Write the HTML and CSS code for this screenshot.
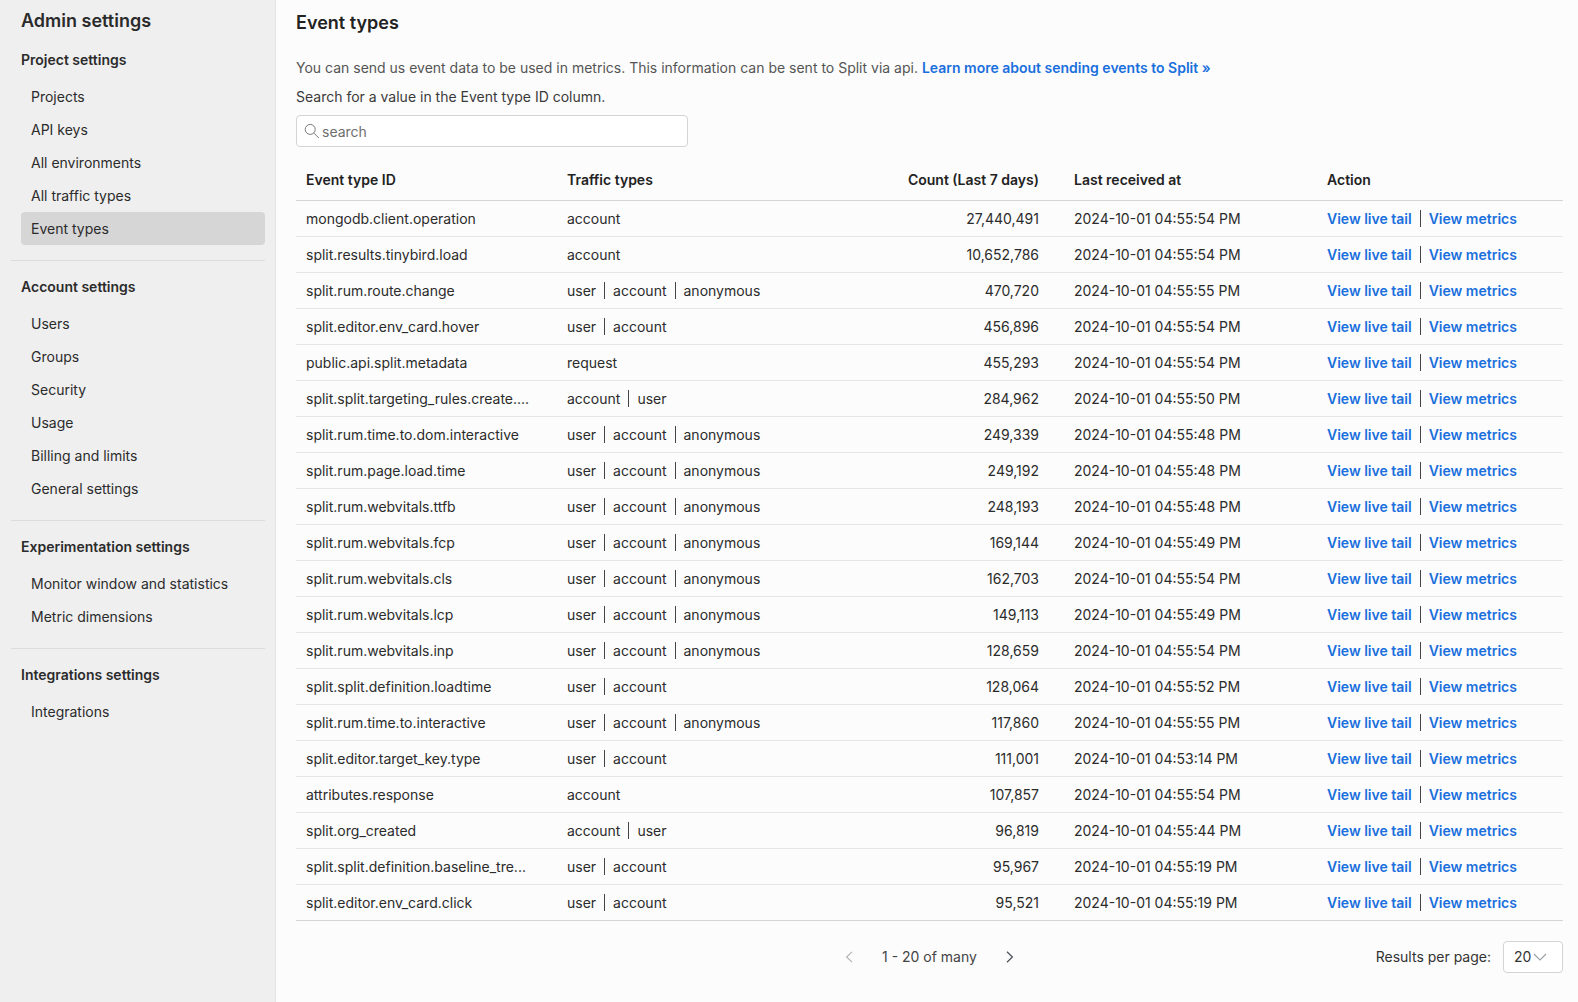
FILE: index.html
```html
<!DOCTYPE html>
<html lang="en">
<head>
<meta charset="utf-8">
<title>Event types</title>
<link rel="stylesheet" href="styles.css">
</head>
<body>
<div class="app">
<aside class="sidebar">
  <h1 class="side-title">Admin settings</h1>
  <section class="side-group">
    <h2 class="group-title">Project settings</h2>
    <a class="nav-item">Projects</a>
    <a class="nav-item">API keys</a>
    <a class="nav-item">All environments</a>
    <a class="nav-item">All traffic types</a>
    <a class="nav-item active">Event types</a>
  </section>
  <section class="side-group">
    <h2 class="group-title">Account settings</h2>
    <a class="nav-item">Users</a>
    <a class="nav-item">Groups</a>
    <a class="nav-item">Security</a>
    <a class="nav-item">Usage</a>
    <a class="nav-item">Billing and limits</a>
    <a class="nav-item">General settings</a>
  </section>
  <section class="side-group">
    <h2 class="group-title">Experimentation settings</h2>
    <a class="nav-item">Monitor window and statistics</a>
    <a class="nav-item">Metric dimensions</a>
  </section>
  <section class="side-group last">
    <h2 class="group-title">Integrations settings</h2>
    <a class="nav-item">Integrations</a>
  </section>
</aside>
<main class="main">
  <h2 class="page-title">Event types</h2>
  <p class="intro">You can send us event data to be used in metrics. This information can be sent to Split via api. <a class="learn">Learn more about sending events to Split »</a></p>
  <p class="hint">Search for a value in the Event type ID column.</p>
  <div class="search">
    <svg class="search-icon" width="16" height="16" viewBox="0 0 16 16" fill="none" stroke="#7a7a7a" stroke-width="1"><circle cx="6.2" cy="6.4" r="5"/><path d="M9.8 10l5 5"/></svg>
    <span class="search-text">search</span>
  </div>
  <table class="table">
    <thead>
      <tr><th class="c-id">Event type ID</th><th class="c-traffic">Traffic types</th><th class="c-count">Count (Last 7 days)</th><th class="c-date">Last received at</th><th class="c-action">Action</th></tr>
    </thead>
    <tbody>
      <tr><td>mongodb.client.operation</td><td><span class="tt">account</span></td><td class="num">27,440,491</td><td>2024-10-01 04:55:54 PM</td><td><a class="link">View live tail</a><a class="link">View metrics</a></td></tr>
      <tr><td>split.results.tinybird.load</td><td><span class="tt">account</span></td><td class="num">10,652,786</td><td>2024-10-01 04:55:54 PM</td><td><a class="link">View live tail</a><a class="link">View metrics</a></td></tr>
      <tr><td>split.rum.route.change</td><td><span class="tt">user</span><span class="tt">account</span><span class="tt">anonymous</span></td><td class="num">470,720</td><td>2024-10-01 04:55:55 PM</td><td><a class="link">View live tail</a><a class="link">View metrics</a></td></tr>
      <tr><td>split.editor.env_card.hover</td><td><span class="tt">user</span><span class="tt">account</span></td><td class="num">456,896</td><td>2024-10-01 04:55:54 PM</td><td><a class="link">View live tail</a><a class="link">View metrics</a></td></tr>
      <tr><td>public.api.split.metadata</td><td><span class="tt">request</span></td><td class="num">455,293</td><td>2024-10-01 04:55:54 PM</td><td><a class="link">View live tail</a><a class="link">View metrics</a></td></tr>
      <tr><td>split.split.targeting_rules.create....</td><td><span class="tt">account</span><span class="tt">user</span></td><td class="num">284,962</td><td>2024-10-01 04:55:50 PM</td><td><a class="link">View live tail</a><a class="link">View metrics</a></td></tr>
      <tr><td>split.rum.time.to.dom.interactive</td><td><span class="tt">user</span><span class="tt">account</span><span class="tt">anonymous</span></td><td class="num">249,339</td><td>2024-10-01 04:55:48 PM</td><td><a class="link">View live tail</a><a class="link">View metrics</a></td></tr>
      <tr><td>split.rum.page.load.time</td><td><span class="tt">user</span><span class="tt">account</span><span class="tt">anonymous</span></td><td class="num">249,192</td><td>2024-10-01 04:55:48 PM</td><td><a class="link">View live tail</a><a class="link">View metrics</a></td></tr>
      <tr><td>split.rum.webvitals.ttfb</td><td><span class="tt">user</span><span class="tt">account</span><span class="tt">anonymous</span></td><td class="num">248,193</td><td>2024-10-01 04:55:48 PM</td><td><a class="link">View live tail</a><a class="link">View metrics</a></td></tr>
      <tr><td>split.rum.webvitals.fcp</td><td><span class="tt">user</span><span class="tt">account</span><span class="tt">anonymous</span></td><td class="num">169,144</td><td>2024-10-01 04:55:49 PM</td><td><a class="link">View live tail</a><a class="link">View metrics</a></td></tr>
      <tr><td>split.rum.webvitals.cls</td><td><span class="tt">user</span><span class="tt">account</span><span class="tt">anonymous</span></td><td class="num">162,703</td><td>2024-10-01 04:55:54 PM</td><td><a class="link">View live tail</a><a class="link">View metrics</a></td></tr>
      <tr><td>split.rum.webvitals.lcp</td><td><span class="tt">user</span><span class="tt">account</span><span class="tt">anonymous</span></td><td class="num">149,113</td><td>2024-10-01 04:55:49 PM</td><td><a class="link">View live tail</a><a class="link">View metrics</a></td></tr>
      <tr><td>split.rum.webvitals.inp</td><td><span class="tt">user</span><span class="tt">account</span><span class="tt">anonymous</span></td><td class="num">128,659</td><td>2024-10-01 04:55:54 PM</td><td><a class="link">View live tail</a><a class="link">View metrics</a></td></tr>
      <tr><td>split.split.definition.loadtime</td><td><span class="tt">user</span><span class="tt">account</span></td><td class="num">128,064</td><td>2024-10-01 04:55:52 PM</td><td><a class="link">View live tail</a><a class="link">View metrics</a></td></tr>
      <tr><td>split.rum.time.to.interactive</td><td><span class="tt">user</span><span class="tt">account</span><span class="tt">anonymous</span></td><td class="num">117,860</td><td>2024-10-01 04:55:55 PM</td><td><a class="link">View live tail</a><a class="link">View metrics</a></td></tr>
      <tr><td>split.editor.target_key.type</td><td><span class="tt">user</span><span class="tt">account</span></td><td class="num">111,001</td><td>2024-10-01 04:53:14 PM</td><td><a class="link">View live tail</a><a class="link">View metrics</a></td></tr>
      <tr><td>attributes.response</td><td><span class="tt">account</span></td><td class="num">107,857</td><td>2024-10-01 04:55:54 PM</td><td><a class="link">View live tail</a><a class="link">View metrics</a></td></tr>
      <tr><td>split.org_created</td><td><span class="tt">account</span><span class="tt">user</span></td><td class="num">96,819</td><td>2024-10-01 04:55:44 PM</td><td><a class="link">View live tail</a><a class="link">View metrics</a></td></tr>
      <tr><td>split.split.definition.baseline_tre...</td><td><span class="tt">user</span><span class="tt">account</span></td><td class="num">95,967</td><td>2024-10-01 04:55:19 PM</td><td><a class="link">View live tail</a><a class="link">View metrics</a></td></tr>
      <tr><td>split.editor.env_card.click</td><td><span class="tt">user</span><span class="tt">account</span></td><td class="num">95,521</td><td>2024-10-01 04:55:19 PM</td><td><a class="link">View live tail</a><a class="link">View metrics</a></td></tr>
    </tbody>
  </table>
  <div class="pager">
    <div class="pager-center">
      <svg class="chev" width="10" height="12" viewBox="0 0 10 12" fill="none" stroke="#b0b0b0" stroke-width="1.1"><path d="M8 0.8L2.6 6 8 11.2"/></svg>
      <span class="pager-text">1 - 20 of many</span>
      <svg class="chev" width="10" height="12" viewBox="0 0 10 12" fill="none" stroke="#4a4f5a" stroke-width="1.2"><path d="M2 0.8L7.4 6 2 11.2"/></svg>
    </div>
    <div class="per-page">
      <span>Results per page:</span>
      <div class="select"><span>20</span><svg width="14" height="8" viewBox="0 0 14 8" fill="none" stroke="#9a9ea6" stroke-width="1.1"><path d="M1 1l6 6 6-6"/></svg></div>
    </div>
  </div>
</main>
</div>
</body>
</html>
```
FILE: styles.css
```css
* { box-sizing: border-box; }
html, body { margin: 0; padding: 0; height: 100%; }
body { font-family: Inter, "Liberation Sans", sans-serif; font-size: 14px; color: #2b2b2b; background: #fcfcfc; overflow: hidden; }
.app { display: flex; height: 1002px; }
.sidebar { width: 276px; flex: none; background: #efefef; border-right: 1px solid #e2e2e2; padding: 9px 10px 0 11px; }
.side-title { margin: 0 0 2px 10px; font-size: 18px; line-height: 23px; font-weight: 600; color: #2b2b2b; }
.side-group { padding: 15px 0 15px; border-bottom: 1px solid #dcdcdc; }
.side-group.last { border-bottom: 0; }
.group-title { margin: 0 0 10px 10px; font-size: 14px; line-height: 21px; font-weight: 600; color: #2b2b2b; }
.nav-item { display: block; margin-left: 10px; height: 33px; line-height: 33px; padding-left: 10px; border-radius: 4px; color: #2b2b2b; }
.nav-item.active { background: #d6d6d6; }
.main { flex: 1; min-width: 0; padding: 11px 15px 0 20px; }
.page-title { margin: 0; font-size: 18px; line-height: 23px; font-weight: 600; color: #222; }
.intro { margin: 23px 0 0; line-height: 21px; color: #555; }
.learn { color: #1a6fdc; font-weight: 600; }
.hint { margin: 8px 0 0; line-height: 21px; color: #3a3a3a; }
.search { margin-top: 8px; width: 392px; height: 32px; background: #fff; border: 1px solid #d4d4d4; border-radius: 4px; display: flex; align-items: center; padding-left: 7px; gap: 2px; }
.search-text { color: #6f6f6f; }
.table { width: 1267px; margin-top: 13px; border-collapse: collapse; table-layout: fixed; border-bottom: 1px solid #d4d4d4; }
.table th { height: 40px; text-align: left; font-weight: 600; color: #222; border-bottom: 1px solid #d4d4d4; padding: 0 0 0 10px; }
.table td { height: 36px; padding: 0 0 0 10px; border-bottom: 1px solid #e6e6e6; color: #2b2b2b; white-space: nowrap; }
.table tbody tr:last-child td { border-bottom: 0; }
.table .c-id { width: 261px; }
.table .c-traffic { width: 255px; }
.table .c-count { width: 227px; text-align: right; padding: 0; }
.table td.num { text-align: right; padding: 0; }
.table .c-date { width: 288px; padding-left: 35px; }
.table td:nth-child(4) { padding-left: 35px; }
.table .c-action { width: auto; padding-left: 0; }
.table td:nth-child(5) { padding-left: 0; }
.tt + .tt { border-left: 1px solid #444; margin-left: 8px; padding-left: 8px; }
.link { color: #1a6fdc; font-weight: 600; }
.link + .link { border-left: 1px solid #444; margin-left: 8px; padding-left: 8px; }
.pager { position: relative; display: flex; justify-content: flex-end; align-items: center; height: 32px; margin-top: 20px; }
.pager-center { position: absolute; left: 548px; top: 0; height: 32px; display: flex; align-items: center; color: #444; }
.pager-text { margin: 0 28px; }
.per-page { display: flex; align-items: center; gap: 12px; color: #333; }
.select { width: 60px; height: 32px; background: #fff; border: 1px solid #d4d4d4; border-radius: 4px; display: flex; align-items: center; padding-left: 10px; gap: 2px; }
```
